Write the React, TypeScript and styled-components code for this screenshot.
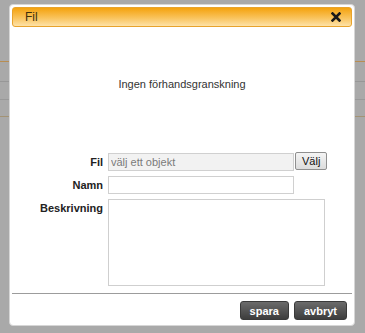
import React from 'react'
import styled, {createGlobalStyle} from 'styled-components'

const GlobalStyle = createGlobalStyle`
  html, body {
    margin:0;
    padding:0;
    background:#a9a9a9;
    font-family:Arial, "Liberation Sans", sans-serif;
  }
`

const Page = styled.div`
  position:relative;
  width:365px;
  height:333px;
  overflow:hidden;
  background:#a9a9a9;
`

const Backdrop = styled.div`
  display:flex;
  flex-direction:column;
  padding-top:61px;
`

const BackLine = styled.div<{$tone:string; $gap:number}>`
  height:1px;
  margin-bottom:${p=>p.$gap}px;
  background:${p=>p.$tone};
`

const Dialog = styled.div`
  position:absolute;
  top:4px;
  left:9px;
  width:346px;
  height:322px;
  box-sizing:border-box;
  background:#fff;
  border:1px solid #d6d6d6;
  border-radius:4px;
  padding:2px 2px 0 2px;
  display:flex;
  flex-direction:column;
`

const TitleBar = styled.div`
  height:20px;
  box-sizing:border-box;
  display:flex;
  align-items:center;
  justify-content:space-between;
  padding:0 10px 0 12px;
  border:1px solid #e8a32c;
  border-radius:3px;
  background:linear-gradient(to bottom,#f4a20e 0%,#f9c35c 55%,#fde2a8 100%);
`

const Title = styled.span`
  font-size:12px;
  color:#3f300c;
`

const Close = styled.svg`
  width:10px;
  height:10px;
`

const Preview = styled.div`
  height:126px;
  display:flex;
  align-items:center;
  justify-content:center;
  font-size:11px;
  color:#333;
  padding-bottom:13px;
  box-sizing:border-box;
`

const Form = styled.div`
  display:grid;
  grid-template-columns:91px 1fr;
  column-gap:5px;
  row-gap:5px;
  align-items:start;
`

const Label = styled.label`
  font-size:11px;
  font-weight:bold;
  color:#222;
  text-align:right;
  padding-top:3px;
`

const Field = styled.div`
  display:flex;
  align-items:flex-start;
`

const Input = styled.input<{$filled?:boolean}>`
  width:186px;
  height:18px;
  box-sizing:border-box;
  border:1px solid #d0d0d0;
  background:${p=>p.$filled?'#f2f2f2':'#fff'};
  font-family:Arial, "Liberation Sans", sans-serif;
  font-size:11px;
  padding:0 2px;
  margin:0;
  outline:none;
  &::placeholder { color:#7a7a7a; }
`

const PickButton = styled.button`
  height:18px;
  margin:-1px 0 0 1px;
  padding:0 6px;
  box-sizing:border-box;
  border:1px solid #8f8f8f;
  border-radius:2px;
  background:linear-gradient(to bottom,#f4f4f4,#dcdcdc);
  font-family:Arial, "Liberation Sans", sans-serif;
  font-size:11px;
  color:#111;
`

const TextArea = styled.textarea`
  width:217px;
  height:87px;
  box-sizing:border-box;
  border:1px solid #cfcfcf;
  margin:0;
  resize:none;
  outline:none;
`

const Divider = styled.div`
  height:1px;
  background:#9c9c9c;
  margin-top:7px;
`

const Footer = styled.div`
  display:flex;
  justify-content:flex-end;
  gap:5px;
  padding:7px 5px 0 0;
`

const ActionButton = styled.button`
  height:19px;
  padding:0 9px;
  box-sizing:border-box;
  border:1px solid #3a3a3a;
  border-radius:3px;
  background:linear-gradient(to bottom,#6b6b6b,#3d3d3d);
  color:#fff;
  font-family:Arial, "Liberation Sans", sans-serif;
  font-size:11px;
  font-weight:bold;
`

export default function App(){
  return(
    <Page>
      <GlobalStyle/>
      <Backdrop>
        <BackLine $tone="#b88d52" $gap={19}/>
        <BackLine $tone="#979797" $gap={17}/>
        <BackLine $tone="#999999" $gap={16}/>
        <BackLine $tone="#a39375" $gap={0}/>
      </Backdrop>
      <Dialog>
        <TitleBar>
          <Title>Fil</Title>
          <Close viewBox="0 0 10 10">
            <path d="M1.5 1.5 L8.5 8.5 M8.5 1.5 L1.5 8.5" stroke="#1a1a1a" strokeWidth="2.6" strokeLinecap="square"/>
          </Close>
        </TitleBar>
        <Preview>Ingen förhandsgranskning</Preview>
        <Form>
          <Label>Fil</Label>
          <Field>
            <Input $filled placeholder="välj ett objekt"/>
            <PickButton>Välj</PickButton>
          </Field>
          <Label>Namn</Label>
          <Field>
            <Input/>
          </Field>
          <Label>Beskrivning</Label>
          <Field>
            <TextArea/>
          </Field>
        </Form>
        <Divider/>
        <Footer>
          <ActionButton>spara</ActionButton>
          <ActionButton>avbryt</ActionButton>
        </Footer>
      </Dialog>
    </Page>
  )
}
